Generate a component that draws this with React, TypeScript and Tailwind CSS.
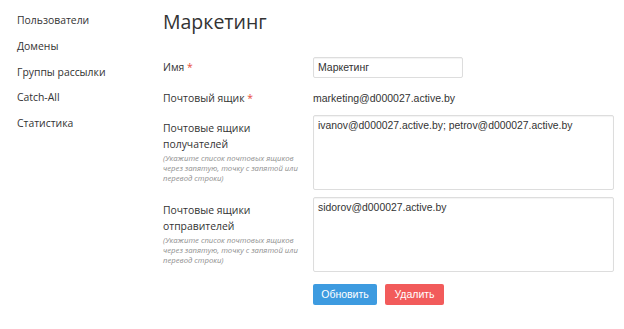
const menu = ["Пользователи", "Домены", "Группы рассылки", "Catch-All", "Статистика"];

const Hint = () => (
  <p className="mt-[1px] w-[148px] text-[7.7px] italic leading-[10px] text-[#8f8f8f]">
    (Укажите список почтовых ящиков через запятую, точку с запятой или перевод строки)
  </p>
);

const App = () => {
  return (
    <div className="flex h-[329px] w-[624px] bg-white font-['Open_Sans',sans-serif] text-[#333]">
      <div className="w-[163px] shrink-0 pl-[17px] pt-[7px] text-[10.4px]">
        {menu.map((m) => (
          <div key={m} className="h-[25.75px] leading-[26px]">
            {m}
          </div>
        ))}
      </div>

      <div className="flex-1">
        <h1 className="mt-[7px] text-[19.5px] leading-[30px] text-[#333]">Маркетинг</h1>

        <div className="mt-[20px] grid grid-cols-[150px_301px] text-[10.4px]">
          <div className="leading-[21px]">
            Имя <span className="text-[#e74c3c]">*</span>
          </div>
          <div>
            <div className="h-[21px] w-[150px] rounded-[2px] border border-[#ddd] px-[4px] font-['Liberation_Sans',sans-serif] text-[10.5px] leading-[19px] shadow-[inset_0_1px_1px_rgba(0,0,0,0.05)]">
              Маркетинг
            </div>
          </div>

          <div className="mt-[10px] leading-[20px]">
            Почтовый ящик <span className="text-[#e74c3c]">*</span>
          </div>
          <div className="mt-[10px] font-['Liberation_Sans',sans-serif] text-[10.5px] leading-[20px]">
            marketing@d000027.active.by
          </div>

          <div className="mt-[7px] pt-[5px]">
            <div className="leading-[16px]">
              Почтовые ящики
              <br />
              получателей
            </div>
            <Hint />
          </div>
          <div className="mt-[7px] h-[75px] rounded-[2px] border border-[#ddd] px-[4px] pt-[2px] font-['Liberation_Sans',sans-serif] text-[10.4px] leading-[15px] shadow-[inset_0_1px_1px_rgba(0,0,0,0.05)]">
            ivanov@d000027.active.by; petrov@d000027.active.by
          </div>

          <div className="mt-[7px] pt-[5px]">
            <div className="leading-[16px]">
              Почтовые ящики
              <br />
              отправителей
            </div>
            <Hint />
          </div>
          <div className="mt-[7px] h-[75px] rounded-[2px] border border-[#ddd] px-[4px] pt-[2px] font-['Liberation_Sans',sans-serif] text-[10.4px] leading-[15px] shadow-[inset_0_1px_1px_rgba(0,0,0,0.05)]">
            sidorov@d000027.active.by
          </div>

          <div />
          <div className="mt-[12px] flex gap-[8px]">
            <button className="h-[21px] w-[64px] rounded-[2px] bg-[#3d9be0] font-['Liberation_Sans',sans-serif] text-[10.5px] leading-[21px] text-white">
              Обновить
            </button>
            <button className="h-[21px] w-[59px] rounded-[2px] bg-[#f25b5b] font-['Liberation_Sans',sans-serif] text-[10.5px] leading-[21px] text-white">
              Удалить
            </button>
          </div>
        </div>
      </div>
    </div>
  );
};

export default App;
